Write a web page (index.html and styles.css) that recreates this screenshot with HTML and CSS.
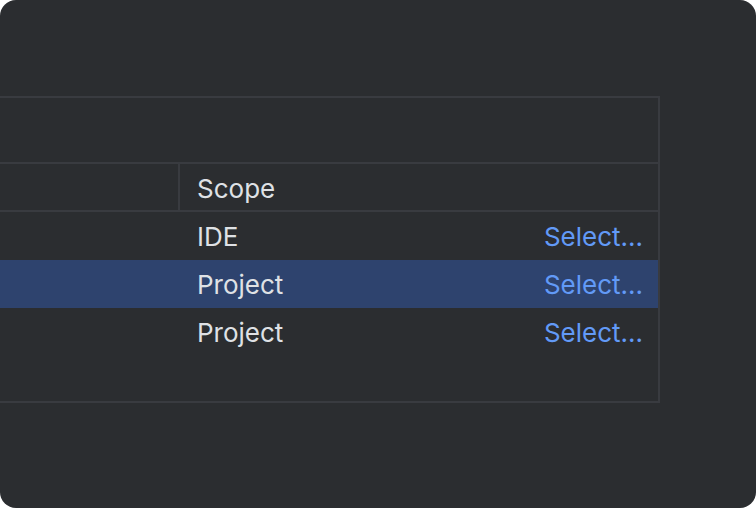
FILE: index.html
```html
<!DOCTYPE html>
<html lang="en">
<head>
<meta charset="utf-8">
<title>Scope table</title>
<link rel="stylesheet" href="styles.css">
</head>
<body>
<div class="card">
  <div class="panel">
    <div class="toolbar"></div>
    <div class="header">
      <div class="hcell name"></div>
      <div class="hcell scope">Scope</div>
    </div>
    <div class="rows">
      <div class="row">
        <div class="cell name"></div>
        <div class="cell scope">IDE</div>
        <a class="link">Select...</a>
      </div>
      <div class="row selected">
        <div class="cell name"></div>
        <div class="cell scope">Project</div>
        <a class="link">Select...</a>
      </div>
      <div class="row">
        <div class="cell name"></div>
        <div class="cell scope">Project</div>
        <a class="link">Select...</a>
      </div>
    </div>
  </div>
</div>
</body>
</html>
```

FILE: styles.css
```css
html, body {
  margin: 0;
  padding: 0;
  background: #ffffff;
}

.card {
  width: 756px;
  height: 508px;
  background: #2b2d30;
  border-radius: 16px;
  overflow: hidden;
  padding-top: 96px;
  box-sizing: border-box;
  font-family: Inter, "Noto Sans", sans-serif;
  font-size: 26px;
  color: #dfe1e5;
}

.panel {
  width: 662px;
  height: 307px;
  margin-left: -2px;
  border: 2px solid #393b40;
  box-sizing: border-box;
  display: flex;
  flex-direction: column;
}

.toolbar {
  height: 64px;
  border-bottom: 2px solid #393b40;
}

.header {
  height: 48px;
  display: flex;
  border-bottom: 2px solid #393b40;
  box-sizing: border-box;
}

.hcell {
  display: flex;
  align-items: center;
  padding-top: 2px;
}

.hcell.name {
  width: 178px;
  border-right: 2px solid #393b40;
  flex: none;
}

.hcell.scope,
.cell.scope {
  padding-left: 17px;
  flex: 1;
}

.row {
  height: 48px;
  display: flex;
  align-items: center;
  padding-top: 1px;
  box-sizing: border-box;
}

.row.selected {
  background: #2e436e;
}

.cell.name {
  width: 180px;
  flex: none;
}

.link {
  color: #629af7;
  padding-right: 15px;
}
```
